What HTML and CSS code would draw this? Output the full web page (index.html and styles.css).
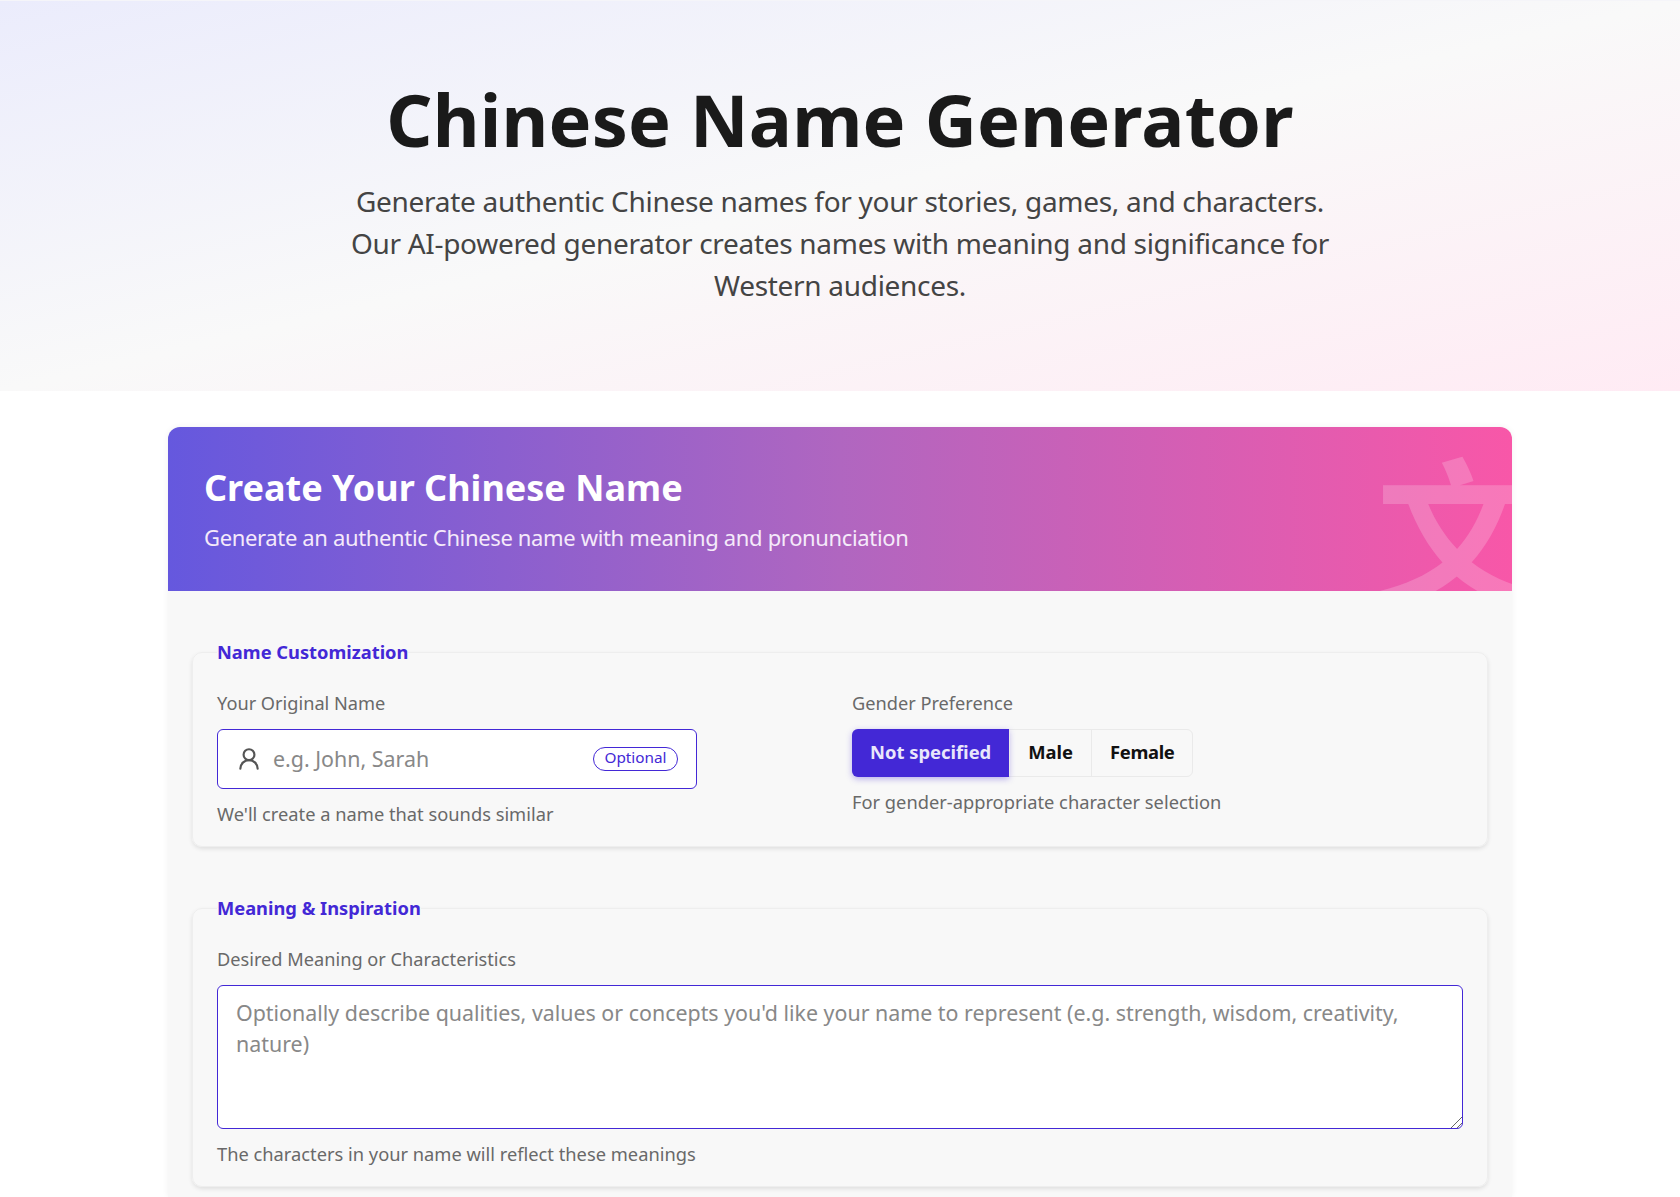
FILE: index.html
```html
<!DOCTYPE html>
<html lang="en">
<head>
<meta charset="utf-8">
<title>Chinese Name Generator</title>
<link rel="stylesheet" href="styles.css">
</head>
<body>
<header class="hero">
  <h1>Chinese Name Generator</h1>
  <p>Generate authentic Chinese names for your stories, games, and characters. Our AI-powered generator creates names with meaning and significance for Western audiences.</p>
</header>
<main class="card">
  <div class="card-head">
    <h2>Create Your Chinese Name</h2>
    <p>Generate an authentic Chinese name with meaning and pronunciation</p>
    <span class="watermark">文</span>
  </div>
  <form class="card-body">
    <fieldset class="group">
      <legend>Name Customization</legend>
      <div class="cols">
        <div class="field">
          <label for="name">Your Original Name</label>
          <div class="input-wrap">
            <svg class="user-icon" viewBox="0 0 24 24" fill="none" stroke="currentColor" stroke-width="2" stroke-linecap="round" stroke-linejoin="round"><circle cx="12" cy="8" r="5"/><path d="M20 21a8 8 0 0 0-16 0"/></svg>
            <input id="name" type="text" placeholder="e.g. John, Sarah">
            <span class="badge">Optional</span>
          </div>
          <p class="hint">We'll create a name that sounds similar</p>
        </div>
        <div class="field">
          <label>Gender Preference</label>
          <div class="seg">
            <button type="button" class="active">Not specified</button>
            <button type="button">Male</button>
            <button type="button">Female</button>
          </div>
          <p class="hint">For gender-appropriate character selection</p>
        </div>
      </div>
    </fieldset>
    <fieldset class="group">
      <legend>Meaning &amp; Inspiration</legend>
      <div class="field">
        <label for="meaning">Desired Meaning or Characteristics</label>
        <textarea id="meaning" placeholder="Optionally describe qualities, values or concepts you'd like your name to represent (e.g. strength, wisdom, creativity, nature)"></textarea>
        <p class="hint">The characters in your name will reflect these meanings</p>
      </div>
    </fieldset>
  </form>
</main>
</body>
</html>
```
FILE: styles.css
```css
* { box-sizing: border-box; }
html, body { margin: 0; padding: 0; background: #fff; }
body { font-family: "Noto Sans", "Noto Sans CJK SC", sans-serif; color: #1a1a1a; }

.hero {
  height: 391px;
  padding-top: 71px;
  text-align: center;
  border-top: 1px solid #f5f5f9;
  background: linear-gradient(to bottom right, #ebecfc 0%, #f9f9f9 50%, #ffebf4 100%);
}
.hero h1 { margin: 0; font-size: 72px; line-height: 94px; font-weight: 700; letter-spacing: .2px; color: #1a1a1a; }
.hero p { margin: 14px auto 0; width: 1000px; font-size: 28px; line-height: 42px; letter-spacing: -.3px; color: #444; font-weight: 400; }

.card {
  width: 1344px;
  margin: 36px auto 0;
  background: #f8f8f8;
  border-radius: 12px 12px 0 0;
  box-shadow: 0 0 6px rgba(0,0,0,.06);
}
.card-head {
  position: relative;
  overflow: hidden;
  height: 164px;
  padding: 37px 36px 0;
  color: #fff;
  border-radius: 12px 12px 0 0;
  background: linear-gradient(90deg, #6558de 0%, #b066c0 50%, #f857a8 100%);
}
.card-head h2 { margin: 0; font-size: 36px; line-height: 48px; font-weight: 700; }
.card-head p { margin: 10px 0 0; font-size: 22px; line-height: 30px; letter-spacing: -.35px; color: #f5eafa; }
.watermark {
  position: absolute;
  right: -24px;
  top: -2px;
  font-family: "Noto Sans CJK SC", sans-serif;
  font-weight: 700;
  font-size: 160px;
  line-height: 200px;
  color: rgba(255,255,255,.2);
}

.card-body { padding: 48px 24px 10px; }
.group {
  margin: 0 0 48px;
  padding: 25px 24px 19px;
  min-width: 0;
  border: 1px solid #eeeeee;
  border-radius: 10px;
  background: #f8f8f8;
  box-shadow: 0 2px 4px rgba(0,0,0,.1);
}
.group:last-child { margin-bottom: 0; }
.group legend { padding: 0; font-size: 18.3px; line-height: 26px; font-weight: 700; color: #4328d6; }

.cols { display: grid; grid-template-columns: 1fr 1fr; gap: 24px; }
.field label { display: block; font-size: 18.2px; line-height: 26px; color: #696969; margin-bottom: 13px; }
.hint { margin: 12px 0 0; font-size: 18.3px; line-height: 26px; color: #696969; }

.input-wrap { position: relative; max-width: 480px; }
.input-wrap input {
  display: block; width: 100%; height: 60px;
  padding: 0 100px 2px 55px;
  font: inherit; font-size: 21.4px; color: #333;
  border: 1px solid #4328d6; border-radius: 6px; background: #fff; outline: none;
}
input::placeholder, textarea::placeholder { color: #888; opacity: 1; }
.user-icon { position: absolute; left: 19px; top: 17px; width: 26px; height: 26px; color: #555; }
.badge {
  position: absolute; right: 19px; top: 18px;
  height: 24px; padding: 0 10.5px;
  font-size: 15.3px; line-height: 18px; color: #4328d6;
  border: 1px solid #4328d6; border-radius: 12px; background: #fff;
}

.seg { display: inline-flex; height: 48px; border-radius: 6px; border: 1px solid #eaeaea; background: #f8f8f8; vertical-align: top; }
.seg button {
  font: inherit; font-size: 18.4px; font-weight: 700; color: #111;
  padding: 0 18px 4px; border: 0; border-left: 1px solid #eaeaea; background: none;
}
.seg button:first-child { border-left: 0; }
.seg button:last-child { letter-spacing: -.35px; }
.seg button.active {
  margin: -1px 0 -1px -1px; color: #e9e6fb; background: #4328d6;
  border-radius: 6px 0 0 6px; box-shadow: 0 2px 6px rgba(67,40,214,.35);
}

textarea {
  display: block; width: 100%; height: 144px;
  padding: 11px 18px;
  font: inherit; font-size: 21.4px; line-height: 31px; color: #333;
  border: 1px solid #4328d6; border-radius: 6px; background: #fff; outline: none;
}
textarea::-webkit-resizer {
  background: linear-gradient(135deg, transparent 60%, #666 60%, #666 66%, transparent 66%, transparent 80%, #666 80%, #666 86%, transparent 86%);
}
```
